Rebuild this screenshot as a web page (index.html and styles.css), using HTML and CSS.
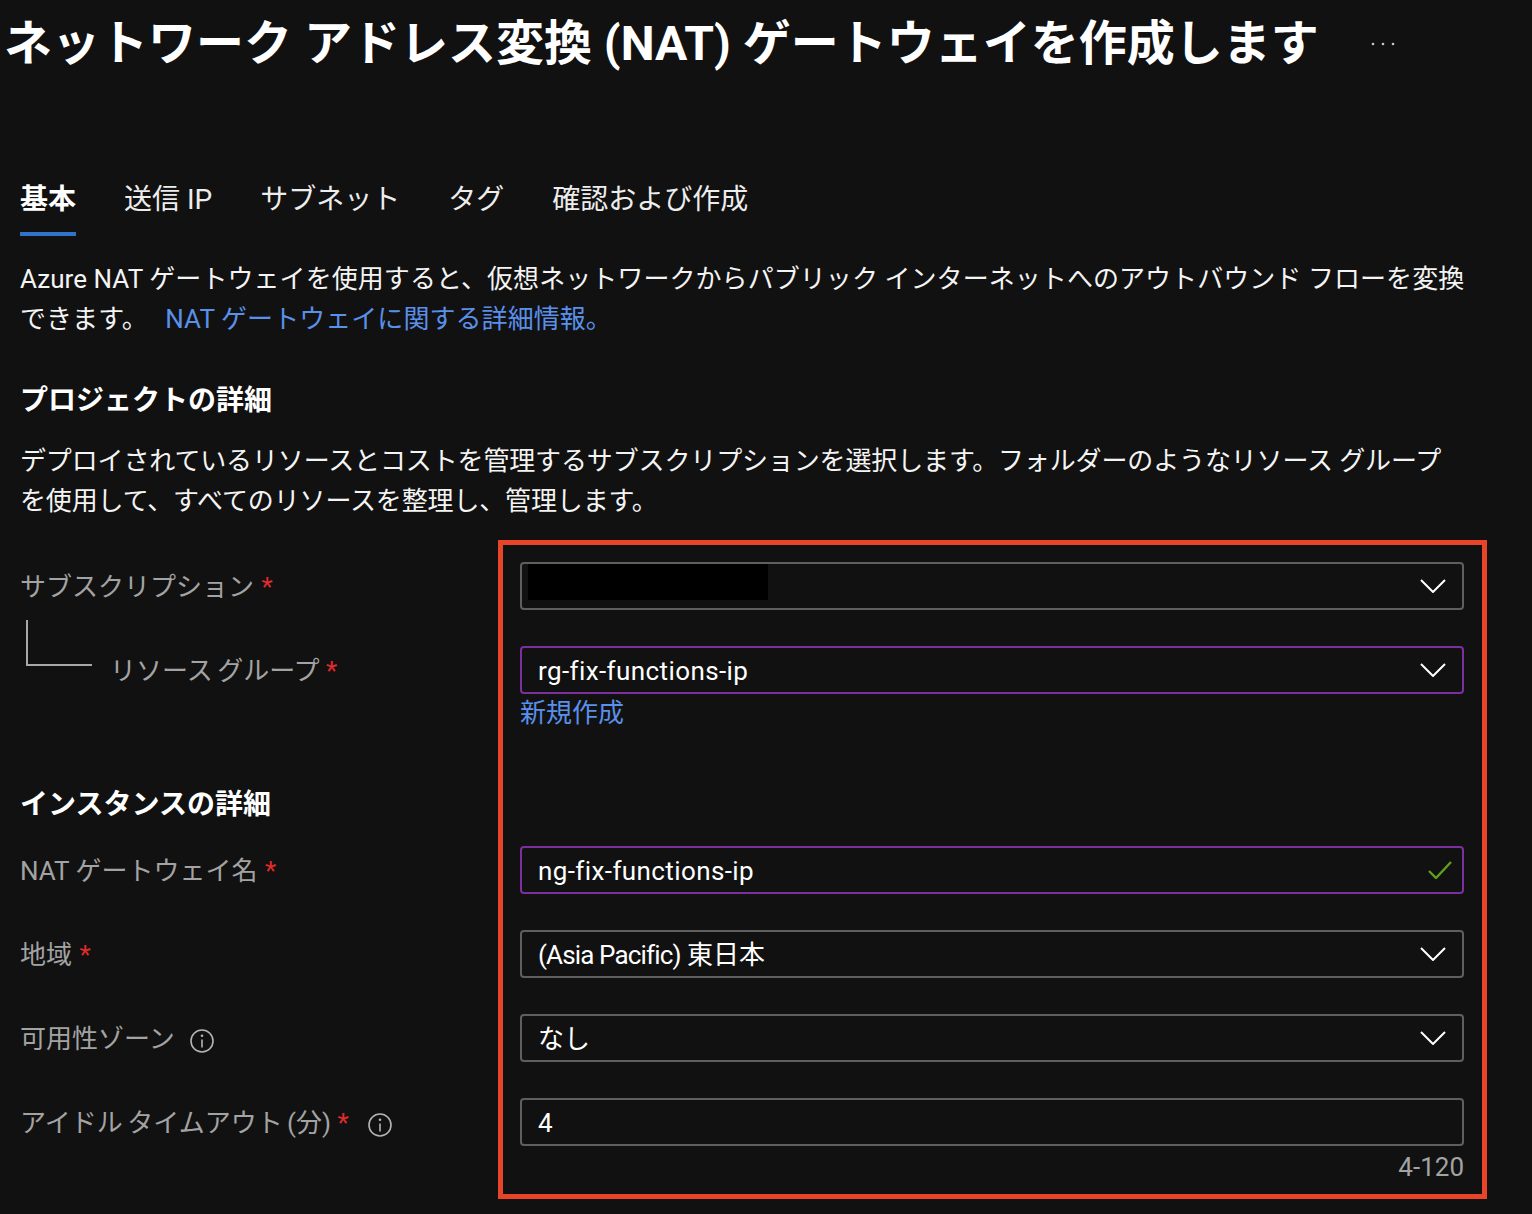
FILE: index.html
```html
<!DOCTYPE html>
<html lang="ja">
<head>
<meta charset="utf-8">
<title>NAT ゲートウェイを作成します</title>
<link rel="stylesheet" href="styles.css">
</head>
<body>
<header class="title-bar">
  <h1 class="title">ネットワーク アドレス変換 (NAT) ゲートウェイを作成します</h1>
  <svg class="more" viewBox="0 0 24 4"><circle cx="2" cy="2" r="1.3"/><circle cx="12" cy="2" r="1.3"/><circle cx="22" cy="2" r="1.3"/></svg>
</header>
<nav class="tabs">
  <span class="tab active">基本</span>
  <span class="tab">送信 IP</span>
  <span class="tab">サブネット</span>
  <span class="tab">タグ</span>
  <span class="tab">確認および作成</span>
</nav>
<main class="content">
  <p class="text intro">Azure NAT ゲートウェイを使用すると、仮想ネットワークからパブリック インターネットへのアウトバウンド フローを変換<br>できます。 <a class="link intro-link">NAT ゲートウェイに関する詳細情報。</a></p>
  <h2 class="section">プロジェクトの詳細</h2>
  <p class="text desc">デプロイされているリソースとコストを管理するサブスクリプションを選択します。フォルダーのようなリソース グループ<br>を使用して、すべてのリソースを整理し、管理します。</p>

  <div class="form first">
    <div class="row">
      <label class="label">サブスクリプション <span class="req">*</span></label>
      <div class="control">
        <span class="redact"></span>
        <svg class="chev" viewBox="0 0 26 14"><path d="M1 1l12 12L25 1"/></svg>
      </div>
    </div>
    <div class="row row-tight">
      <label class="label nested label-tight"><span class="tree"></span>リソース グループ <span class="req">*</span></label>
      <div class="control focus">
        <span class="value value-wide">rg-fix-functions-ip</span>
        <svg class="chev" viewBox="0 0 26 14"><path d="M1 1l12 12L25 1"/></svg>
      </div>
    </div>
    <div class="row-link"><a class="link">新規作成</a></div>
  </div>

  <h2 class="section instance">インスタンスの詳細</h2>

  <div class="form">
    <div class="row">
      <label class="label">NAT ゲートウェイ名 <span class="req">*</span></label>
      <div class="control focus">
        <span class="value value-wide">ng-fix-functions-ip</span>
        <svg class="check" viewBox="0 0 24 18"><path d="M1 10l7 7L23 1"/></svg>
      </div>
    </div>
    <div class="row">
      <label class="label">地域 <span class="req">*</span></label>
      <div class="control">
        <span class="value"><span class="value-narrow">(Asia Pacific)</span> 東日本</span>
        <svg class="chev" viewBox="0 0 26 14"><path d="M1 1l12 12L25 1"/></svg>
      </div>
    </div>
    <div class="row">
      <label class="label">可用性ゾーン
        <svg class="info" viewBox="0 0 24 24"><circle cx="12" cy="12" r="11"/><path d="M12 10.5v8"/><circle class="dot" cx="12" cy="6.8" r="1.3"/></svg>
      </label>
      <div class="control">
        <span class="value">なし</span>
        <svg class="chev" viewBox="0 0 26 14"><path d="M1 1l12 12L25 1"/></svg>
      </div>
    </div>
    <div class="row row-tight">
      <label class="label label-tight">アイドル タイムアウト (分) <span class="req">*</span>
        <svg class="info" viewBox="0 0 24 24"><circle cx="12" cy="12" r="11"/><path d="M12 10.5v8"/><circle class="dot" cx="12" cy="6.8" r="1.3"/></svg>
      </label>
      <div class="control">
        <span class="value">4</span>
      </div>
    </div>
    <div class="range">4-120</div>
  </div>
</main>
<div class="highlight"></div>
</body>
</html>
```
FILE: styles.css
```css
* { box-sizing: border-box; }

html, body {
  margin: 0;
  height: 1214px;
  overflow: hidden;
}

body {
  position: relative;
  background: #111111;
  color: #f4f4f4;
  font-family: Roboto, "Noto Sans CJK JP", sans-serif;
  font-size: 26px;
  line-height: 41px;
}

.title-bar {
  display: flex;
  align-items: center;
  height: 84px;
  padding-left: 4px;
}

.title {
  margin: 0;
  padding-top: 4px;
  font-size: 48px;
  font-weight: 700;
  line-height: 80px;
  color: #ffffff;
  white-space: nowrap;
  width: 1367px;
}

.more {
  width: 24px;
  height: 4px;
  margin-top: 4px;
  fill: #c8c8c8;
}

.tabs {
  display: flex;
  gap: 48px;
  margin-top: 84px;
  padding-left: 20px;
  height: 68px;
}

.tab {
  font-size: 28px;
  line-height: 64px;
  height: 68px;
  color: #ededed;
  white-space: nowrap;
}

.tab.active {
  font-weight: 700;
  color: #ffffff;
  border-bottom: 4px solid #2f74c8;
}

.content {
  padding-left: 20px;
  padding-top: 23px;
}

.text {
  margin: 0;
  white-space: nowrap;
  line-height: 40px;
}

.intro {
  letter-spacing: 0.06px;
}

.link {
  color: #5a90ea;
}

.intro-link {
  margin-left: 11px;
}

.section {
  margin: 41px 0 0;
  font-size: 28px;
  font-weight: 700;
  line-height: 41px;
  color: #ffffff;
}

.desc {
  margin-top: 20px;
  letter-spacing: -0.14px;
}

.form.first {
  margin-top: 41px;
}

.row {
  display: grid;
  grid-template-columns: 500px 944px;
  align-items: center;
  height: 48px;
  margin-bottom: 36px;
}

.row-tight {
  margin-bottom: 0;
}

.label {
  display: block;
  padding-top: 2px;
  color: #a3a3a3;
  white-space: nowrap;
}

.label-tight {
  word-spacing: -2px;
}

.label-tight .req {
  margin-left: 2px;
}

.label-tight .info {
  margin-left: 15px;
}

.nested {
  position: relative;
  padding-left: 90px;
}

.tree {
  position: absolute;
  left: 6px;
  top: -29px;
  width: 66px;
  height: 46px;
  border-left: 2px solid #a8a8a8;
  border-bottom: 2px solid #a8a8a8;
}

.req {
  margin-left: 1px;
  color: #e02b2b;
}

.info {
  width: 24px;
  height: 24px;
  margin-left: 9px;
  vertical-align: -5px;
  fill: none;
  stroke: #b4b4b4;
  stroke-width: 1.6;
}

.info .dot {
  fill: #b4b4b4;
  stroke: none;
}

.control {
  display: flex;
  align-items: center;
  justify-content: space-between;
  height: 48px;
  padding: 0 16px;
  border: 2px solid #5f5f5f;
  border-radius: 4px;
}

.control.focus {
  border-color: #7e2f9f;
}

.value {
  padding-top: 2px;
  color: #ffffff;
}

.value-wide {
  letter-spacing: 0.4px;
}

.value-narrow {
  letter-spacing: -0.85px;
}

.redact {
  display: block;
  width: 240px;
  height: 36px;
  margin-left: -10px;
  margin-top: -8px;
  background: #000000;
}

.chev {
  width: 26px;
  height: 14px;
  fill: none;
  stroke: #ffffff;
  stroke-width: 2;
}

.check {
  width: 24px;
  height: 18px;
  margin-right: -6px;
  fill: none;
  stroke: #5f9e1f;
  stroke-width: 2.4;
}

.row-link {
  padding-left: 500px;
  height: 41px;
  line-height: 39px;
}

.section.instance {
  margin-top: 48px;
  line-height: 43px;
}

.instance + .form {
  margin-top: 20px;
}

.range {
  width: 1444px;
  text-align: right;
  color: #a3a3a3;
  line-height: 42px;
}

.highlight {
  position: absolute;
  left: 498px;
  top: 540px;
  width: 989px;
  height: 659px;
  border: 5px solid #e8442a;
  pointer-events: none;
}
```
